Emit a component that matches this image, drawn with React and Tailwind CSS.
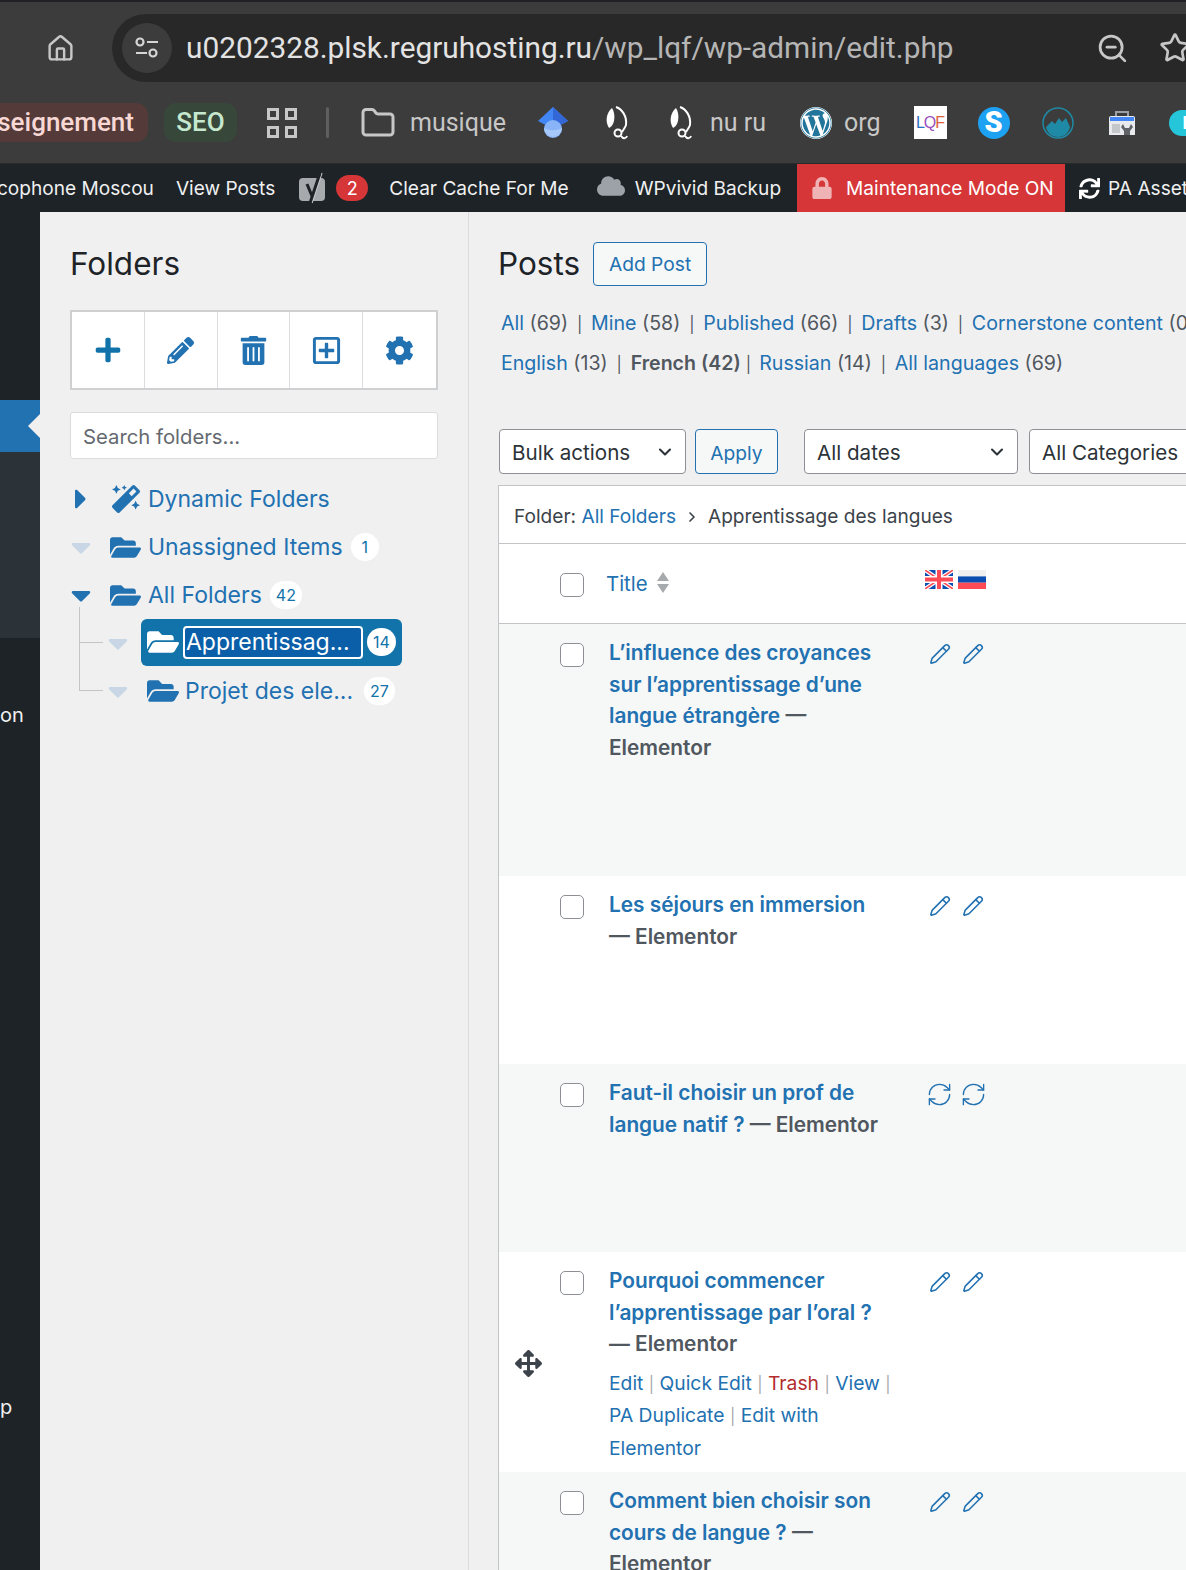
import { ChevronDown, ChevronRight, Folder, House, Pencil, RefreshCw, Star, ZoomOut } from "lucide-react";
import {
  FaArrowsAlt,
  FaCaretDown,
  FaCaretRight,
  FaCloud,
  FaCog,
  FaFolderOpen,
  FaLock,
  FaMagic,
  FaPencilAlt,
  FaPlus,
  FaRegPlusSquare,
  FaSync,
  FaTrashAlt,
  FaWordpress,
} from "react-icons/fa";

const QuillIcon = () => (
  <svg width="26" height="36" viewBox="0 0 26 36">
    <path d="M8 3C2 8 1 17 5 23c2-1 4-3 5-7 1-5 0-10-2-13z" fill="#fff" />
    <path d="M12 2c6 2 11 9 10 18-1 3-3 5-4 7" fill="none" stroke="#fff" strokeWidth="2" />
    <circle cx="14" cy="28" r="3.5" fill="none" stroke="#fff" strokeWidth="2" />
    <path d="M17 31c2 3 5 3 6 0" fill="none" stroke="#fff" strokeWidth="2" />
  </svg>
);

const YoastIcon = () => (
  <svg width="28" height="34" viewBox="0 0 28 34">
    <rect x="1" y="7" width="26" height="23" rx="4" fill="#a7aaad" />
    <path d="M9 13l5 12" fill="none" stroke="#1d2327" strokeWidth="3" />
    <path d="M24 2l-10 30" fill="none" stroke="#c8cbce" strokeWidth="1.2" />
    <path d="M22 2l-10 30" fill="none" stroke="#1d2327" strokeWidth="3" />
  </svg>
);

const Bookmarks = () => (
  <div className="flex h-[81px] items-center whitespace-nowrap font-['Roboto',sans-serif] text-[25px] text-[#c7c7c7] *:shrink-0">
    <div className="-ml-[30px] flex h-[39px] w-[178px] items-center justify-end rounded-[12px] bg-[#543a38] pr-[14px] text-[26px] font-medium text-[#f8d8d5]">
      <span>seignement</span>
    </div>
    <div className="ml-4 flex h-[39px] w-[73px] items-center justify-center rounded-[12px] bg-[#37483a] text-[26px] font-medium text-[#c6e8ce]">
      SEO
    </div>
    <div className="ml-[30px] grid w-[30px] grid-cols-2 gap-[6px]">
      <span className="h-3 border-[3px] border-[#c7c7c7]" />
      <span className="h-3 border-[3px] border-[#c7c7c7]" />
      <span className="h-3 border-[3px] border-[#c7c7c7]" />
      <span className="h-3 border-[3px] border-[#c7c7c7]" />
    </div>
    <span className="ml-[29px] h-[31px] w-[3px] rounded bg-[#5f5f5f]" />
    <Folder size={36} strokeWidth={2} className="ml-[31px]" />
    <span className="ml-[14px]">musique</span>
    <svg className="ml-[31px]" width="32" height="33" viewBox="0 0 32 33">
      <path d="M16 1l15 14-15 8L1 15z" fill="#4285f4" />
      <path d="M16 1l15 14-15 8z" fill="#3367d6" />
      <circle cx="16" cy="23" r="9" fill="#8ab4f8" />
      <path d="M7 22a9 9 0 0 0 18 0c-6 3-12 3-18 0z" fill="#a6c8fa" />
    </svg>
    <span className="ml-[35px] flex"><QuillIcon /></span>
    <span className="ml-[38px] flex"><QuillIcon /></span>
    <span className="ml-[16px]">nu ru</span>
    <FaWordpress size={32} className="ml-[34px] rounded-full bg-white text-[#21759b]" />
    <span className="ml-[12px]">org</span>
    <div className="ml-[33px] flex h-[33px] w-[33px] items-center justify-center bg-white font-['Liberation_Sans',sans-serif] text-[16px] leading-none tracking-[-1px]">
      <span className="text-[#2a6fc0]">L</span>
      <span className="text-[#9b4fc0]">Q</span>
      <span className="text-[#e0603a]">F</span>
    </div>
    <div className="ml-[31px] flex h-8 w-8 items-center justify-center rounded-full bg-[#1da1f2] text-[29px] font-black text-white">
      S
    </div>
    <svg className="ml-[32px]" width="32" height="32" viewBox="0 0 32 32">
      <circle cx="16" cy="16" r="15" fill="none" stroke="#1f8aa5" strokeWidth="1.5" />
      <path d="M4 20l6-6 3 3 4-6 3 4 4-4 4 9c-1 6-6 10-12 10S5 26 4 20z" fill="#1f8aa5" />
    </svg>
    <svg className="ml-[34px]" width="28" height="26" viewBox="0 0 28 26">
      <path d="M8 6V2h12v4" fill="none" stroke="#9aa0a6" strokeWidth="2" />
      <path d="M3 6h22a2 2 0 0 1 2 2v17H1V8a2 2 0 0 1 2-2z" fill="#e8eaed" />
      <rect x="2" y="7" width="24" height="4" fill="#4285f4" />
      <rect x="4" y="14" width="8" height="9" fill="#c4c7ca" />
      <path d="M15 14l2 4h4l2-4 2 3-3 4v4h-6v-4l-3-4z" fill="#5f6368" />
    </svg>
    <div className="ml-[33px] flex h-[26px] w-10 items-center rounded-full bg-[#26c6da] pl-[14px] text-[18px] font-bold text-white">
      P
    </div>
  </div>
);

const AdminBar = () => (
  <div className="flex h-[48px] shrink-0 items-center whitespace-nowrap bg-[#1d2327] font-['Inter',sans-serif] text-[19.1px] text-[#f0f0f1] *:shrink-0">
    <span className="-ml-[43px]">Francophone Moscou</span>
    <span className="ml-[22px]">View Posts</span>
    <span className="ml-[23px] flex"><YoastIcon /></span>
    <span className="ml-[10px] flex h-[26px] w-8 items-center justify-center rounded-full bg-[#d63638] text-[18px] text-white">2</span>
    <span className="ml-[21px]">Clear Cache For Me</span>
    <FaCloud size={28} className="ml-[28px] -mt-1 text-[#9ca2a7]" />
    <span className="ml-[10px]">WPvivid Backup</span>
    <div className="ml-[16px] flex h-full w-[268px] items-center bg-[#d63638] pl-[14px] text-white">
      <FaLock size={22} className="text-[#f0b3b5]" />
      <span className="ml-[13px]">Maintenance Mode ON</span>
    </div>
    <FaSync size={21} className="ml-[14px] text-white" />
    <span className="ml-[8px]">PA Assets</span>
  </div>
);

const Sidebar = () => (
  <aside className="flex w-10 shrink-0 flex-col overflow-hidden bg-[#1d2327] font-['Inter',sans-serif] text-[20px] text-[#f0f0f1]">
    <div className="h-[188px]" />
    <div className="relative h-[52px] bg-[#2271b1]">
      <span className="absolute right-0 top-[14px] border-y-[12px] border-r-[12px] border-y-transparent border-r-[#f0f0f1]" />
    </div>
    <div className="h-[186px] bg-[#2c3338]" />
    <div className="mt-[65px] leading-6">on</div>
    <div className="mt-[668px] leading-6">p</div>
  </aside>
);

const toolIcons = [
  <FaPlus size={28} className="text-[#1173a9]" />,
  <FaPencilAlt size={27} className="text-[#2271b1]" />,
  <FaTrashAlt size={29} className="text-[#2271b1]" />,
  <FaRegPlusSquare size={31} className="text-[#2271b1]" />,
  <FaCog size={29} className="text-[#2271b1]" />,
];

const Badge = ({ children, className = "" }) => (
  <span className={`flex h-7 min-w-7 items-center justify-center rounded-full bg-white px-[6px] text-[16px] text-[#1173a9] ${className}`}>
    {children}
  </span>
);

const Caret = ({ faded }) => (
  <FaCaretDown size={32} className={faded ? "text-[#c8d6e5]" : "text-[#2271b1]"} />
);

const FoldersPanel = () => (
  <section className="w-[429px] shrink-0 border-r border-[#dcdcde] pl-[30px] font-['Inter',sans-serif]">
    <h2 className="mt-[30px] text-[31.5px] leading-11 text-[#1d2327]">Folders</h2>
    <div className="mt-[24px] grid h-[80px] w-[368px] grid-cols-5 border-2 border-[#cfd0d2] bg-white">
      {toolIcons.map((icon, i) => (
        <div key={i} className="flex items-center justify-center border-r border-[#dcdcde] last:border-r-0">
          {icon}
        </div>
      ))}
    </div>
    <div className="mt-[22px] flex h-[47px] w-[368px] items-center rounded-[3px] border border-[#dcdcde] bg-white pl-3 pt-[3px] text-[20.3px] text-[#646970]">
      Search folders...
    </div>
    <ul className="relative mt-[16px] text-[23px] text-[#2271b1]">
      <li className="flex h-12 items-center">
        <FaCaretRight size={32} className="-ml-[5px] w-8 text-[#2271b1]" />
        <FaMagic size={28} className="ml-[15px]" />
        <span className="ml-[8px]">Dynamic Folders</span>
      </li>
      <li className="flex h-12 items-center">
        <span className="-ml-[5px] flex w-8 justify-center"><Caret faded /></span>
        <FaFolderOpen size={31} className="ml-[13px]" />
        <span className="ml-[7px]">Unassigned Items</span>
        <Badge className="ml-[8px]">1</Badge>
      </li>
      <li className="flex h-12 items-center">
        <span className="-ml-[5px] flex w-8 justify-center"><Caret /></span>
        <FaFolderOpen size={31} className="ml-[13px]" />
        <span className="ml-[7px]">All Folders</span>
        <Badge className="ml-[8px]">42</Badge>
      </li>
      <li className="relative flex h-12 items-center pl-[32px]">
        <span className="absolute left-[9px] top-[-12px] h-[36px] w-[24px] border-b border-l border-[#c3c4c7]" />
        <span className="flex w-8 justify-center"><Caret faded /></span>
        <div className="ml-[7px] -mt-[2px] flex h-[47px] w-[261px] items-center rounded-md bg-[#1173a9] pl-[6px] text-white">
          <FaFolderOpen size={32} />
          <span className="ml-[4px] flex h-[33px] w-[180px] items-center overflow-hidden rounded-[4px] border-2 border-white bg-[#0b5fa8] pl-[1px]">Apprentissag...</span>
          <Badge className="ml-[4px]">14</Badge>
        </div>
      </li>
      <li className="relative flex h-12 items-center pl-[32px]">
        <span className="absolute left-[9px] top-[-24px] h-[48px] w-[24px] border-b border-l border-[#c3c4c7]" />
        <span className="flex w-8 justify-center"><Caret faded /></span>
        <FaFolderOpen size={32} className="ml-[13px]" />
        <span className="ml-[6px]">Projet des ele...</span>
        <Badge className="ml-[11px]">27</Badge>
      </li>
    </ul>
  </section>
);

const Select = ({ label, className = "" }) => (
  <div className={`flex h-[45px] shrink-0 items-center justify-between rounded-[4px] border border-[#8c8f94] bg-white pl-[12px] pr-[10px] text-[20.6px] text-[#2c3338] ${className}`}>
    <span className="mt-[3px]">{label}</span>
    <ChevronDown size={20} strokeWidth={2.5} />
  </div>
);

const Stat = ({ label, count, bold }) => (
  <span>
    {bold ? <b className="font-semibold text-[#50575e]">{label}</b> : <span className="text-[#2271b1]">{label}</span>}
    <span className={bold ? "font-semibold text-[#50575e]" : "text-[#50575e]"}> ({count})</span>
  </span>
);

const Sep = () => <span className="mx-[8.8px] text-[16px] text-[#50575e]">|</span>;

const StatusIcons = ({ sync }) => (
  <div className={`flex text-[#2271b1] ${sync ? "gap-[7px] pt-[4px]" : "gap-[11px] pt-[6px]"}`}>
    {sync ? (
      <>
        <RefreshCw size={27} strokeWidth={1.2} className="-ml-[3px]" />
        <RefreshCw size={27} strokeWidth={1.2} />
      </>
    ) : (
      <>
        <Pencil size={22} strokeWidth={1.7} />
        <Pencil size={22} strokeWidth={1.7} />
      </>
    )}
  </div>
);

const Checkbox = () => (
  <span className="block h-6 w-6 rounded-[5px] border border-[#8c8f94] bg-white" />
);

const PostRow = ({ title, alt, height, sync, children }) => (
  <div className={`relative flex pt-[13px] ${alt ? "bg-[#f6f7f7]" : "bg-white"} ${height}`}>
    <div className="w-[110px] shrink-0 pl-[61px] pt-[6px]">
      <Checkbox />
    </div>
    <div className="w-[320px] shrink-0 pr-[30px]">
      <div className="w-[275px] text-[20.8px] font-semibold leading-[31.5px] text-[#2271b1]">{title}</div>
      {children}
    </div>
    <StatusIcons sync={sync} />
  </div>
);

const el = <span className="text-[#50575e]">Elementor</span>;
const dash = <span className="text-[#50575e]">—</span>;
const pipe = <span className="text-[16px] text-[#a7aaad]">|</span>;

const PostsPanel = () => (
  <main className="min-w-0 flex-1 pl-[29px] font-['Inter',sans-serif]">
    <div className="mt-[30px] flex h-11 items-center whitespace-nowrap">
      <h1 className="text-[31.5px] text-[#1d2327]">Posts</h1>
      <span className="ml-[13px] flex h-[44px] w-[114px] shrink-0 items-center justify-center rounded-[4px] border border-[#2271b1] bg-[#f6f7f7] text-[19.2px] text-[#2271b1]">Add Post</span>
    </div>
    <div className="mt-[18px] whitespace-nowrap pl-[3px] text-[19.6px] leading-[39px]">
      <div>
        <Stat label="All" count="69" /><Sep />
        <Stat label="Mine" count="58" /><Sep />
        <Stat label="Published" count="66" /><Sep />
        <Stat label="Drafts" count="3" /><Sep />
        <Stat label="Cornerstone content" count="0" />
      </div>
      <div>
        <Stat label="English" count="13" /><Sep />
        <Stat label="French" count="42" bold /><span className="ml-[5px] text-[16px] text-[#50575e]">|</span><span className="mx-[4px]" />
        <Stat label="Russian" count="14" /><Sep />
        <Stat label="All languages" count="69" />
      </div>
    </div>
    <div className="mt-[45px] ml-px flex items-center">
      <Select label="Bulk actions" className="w-[187px]" />
      <span className="ml-[9px] flex h-[45px] w-[83px] shrink-0 items-center justify-center rounded-[4px] border border-[#2271b1] bg-[#f6f7f7] pt-[3px] text-[19.2px] text-[#2271b1]">Apply</span>
      <Select label="All dates" className="ml-[26px] w-[214px]" />
      <Select label="All Categories" className="ml-[11px] w-[214px]" />
    </div>
    <div className="mt-[11px] border border-r-0 border-[#c3c4c7] bg-white">
      <div className="flex h-[58px] items-center border-b border-[#c3c4c7] pl-[15px] pt-[4px] text-[19.1px] text-[#3c434a]">
        <span>Folder:&nbsp;</span>
        <span className="text-[#2271b1]">All Folders</span>
        <ChevronRight size={16} strokeWidth={2.5} className="mx-[8px]" />
        <span>Apprentissage des langues</span>
      </div>
      <div className="flex h-[80px] border-b border-[#c3c4c7]">
        <div className="w-[110px] shrink-0 pl-[61px] pt-[29px]">
          <Checkbox />
        </div>
        <div className="flex w-[316px] shrink-0 items-start pt-[26px]">
          <span className="-ml-[3px] text-[20.4px] leading-7 text-[#2271b1]">Title</span>
          <span className="ml-[9px] mt-[2px] flex flex-col gap-[3px]">
            <span className="border-x-[6px] border-b-[9px] border-x-transparent border-b-[#a7aaad]" />
            <span className="border-x-[6px] border-t-[9px] border-x-transparent border-t-[#a7aaad]" />
          </span>
        </div>
        <div className="flex gap-[5px] pt-[26px]">
          <svg width="28" height="19" viewBox="0 0 28 19">
            <rect width="28" height="19" fill="#0b4db0" />
            <path d="M0 0l28 19M28 0L0 19" stroke="#fff" strokeWidth="4" />
            <path d="M0 0l28 19M28 0L0 19" stroke="#ff4b55" strokeWidth="1.5" />
            <path d="M14 0v19M0 9.5h28" stroke="#fff" strokeWidth="7" />
            <path d="M14 0v19M0 9.5h28" stroke="#ff4b55" strokeWidth="4" />
          </svg>
          <svg width="28" height="19" viewBox="0 0 28 19">
            <rect width="28" height="6.4" fill="#f0f0f0" />
            <rect y="6.4" width="28" height="6.3" fill="#0b4db0" />
            <rect y="12.7" width="28" height="6.3" fill="#ff4b55" />
          </svg>
        </div>
      </div>
      <PostRow alt height="h-[252px]" title={<>L’influence des croyances sur l’apprentissage d’une langue étrangère {dash} {el}</>} />
      <PostRow height="h-[188px]" title={<>Les séjours en immersion {dash} {el}</>} />
      <PostRow alt sync height="h-[188px]" title={<>Faut-il choisir un prof de langue natif ? {dash} {el}</>} />
      <PostRow height="h-[220px]" title={<>Pourquoi commencer l’apprentissage par l’oral ? {dash} {el}</>}>
        <FaArrowsAlt size={27} className="absolute left-[16px] top-[98px] text-[#3c434a]" />
        <div className="mt-[8px] text-[19.3px] leading-[31.5px] text-[#2271b1]">
          Edit {pipe} Quick Edit {pipe}{" "}
          <span className="text-[#b32d2e]">Trash</span> {pipe} View {pipe} PA Duplicate {pipe} Edit with Elementor
        </div>
      </PostRow>
      <PostRow alt height="h-[120px]" title={<>Comment bien choisir son cours de langue ? {dash} {el}</>} />
    </div>
  </main>
);

export default function App() {
  return (
    <div className="flex h-[1570px] w-[1186px] flex-col overflow-hidden bg-[#f0f0f1]">
      <div className="h-[2px] shrink-0 bg-[#202124]" />
      <header className="h-[162px] shrink-0 border-b border-[#2a2a2a] bg-[#3c3c3c] pt-3">
        <div className="flex h-[68px] items-center pl-[46px] text-[#c7c7c7]">
          <House size={29} strokeWidth={2} className="shrink-0" />
          <div className="ml-[37px] flex h-full flex-1 items-center whitespace-nowrap rounded-l-full bg-[#282828] pl-[10px] font-['Roboto',sans-serif] text-[29.8px]">
            <span className="flex h-[50px] w-[50px] shrink-0 flex-col items-center justify-center gap-[3px] rounded-full bg-[#3c3c3c]">
              <svg width="26" height="26" viewBox="0 0 26 26" fill="none" stroke="#d5d5d5" strokeWidth="2.2">
                <circle cx="6" cy="7" r="3.5" />
                <path d="M13 7h11M2 18h11" />
                <circle cx="19" cy="18" r="3.5" />
              </svg>
            </span>
            <span className="ml-[14px] text-[#e3e3e3]">u0202328.plsk.regruhosting.ru<span className="text-[#b5b5b5]">/wp_lqf/wp-admin/edit.php</span></span>
            <ZoomOut size={33} strokeWidth={2} className="ml-[142px] shrink-0" />
            <Star size={32} strokeWidth={2} className="ml-[30px] shrink-0" />
          </div>
        </div>
        <Bookmarks />
      </header>
      <AdminBar />
      <div className="flex min-h-0 flex-1">
        <Sidebar />
        <FoldersPanel />
        <PostsPanel />
      </div>
    </div>
  );
}
